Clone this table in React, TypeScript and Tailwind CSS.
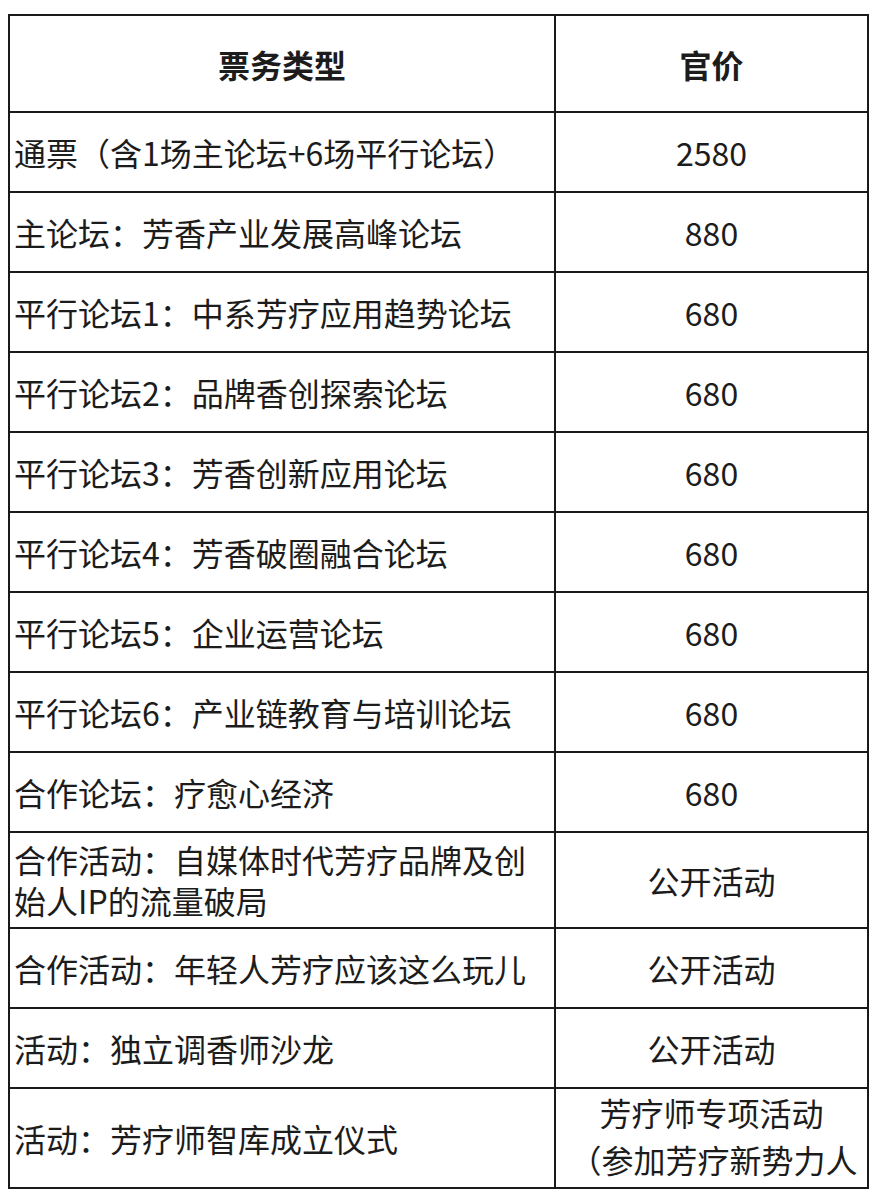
import React from "react";

const rows: { name: React.ReactNode; price: React.ReactNode; h: string }[] = [
  { name: "通票（含1场主论坛+6场平行论坛）", price: "2580", h: "h-[80px]" },
  { name: "主论坛：芳香产业发展高峰论坛", price: "880", h: "h-[80px]" },
  { name: "平行论坛1：中系芳疗应用趋势论坛", price: "680", h: "h-[80px]" },
  { name: "平行论坛2：品牌香创探索论坛", price: "680", h: "h-[80px]" },
  { name: "平行论坛3：芳香创新应用论坛", price: "680", h: "h-[80px]" },
  { name: "平行论坛4：芳香破圈融合论坛", price: "680", h: "h-[80px]" },
  { name: "平行论坛5：企业运营论坛", price: "680", h: "h-[80px]" },
  { name: "平行论坛6：产业链教育与培训论坛", price: "680", h: "h-[80px]" },
  { name: "合作论坛：疗愈心经济", price: "680", h: "h-[80px]" },
  {
    name: (
      <div className="leading-[41px]">
        <div className="whitespace-nowrap">合作活动：自媒体时代芳疗品牌及创</div>
        <div className="whitespace-nowrap">始人IP的流量破局</div>
      </div>
    ),
    price: "公开活动",
    h: "h-[96px]",
  },
  { name: "合作活动：年轻人芳疗应该这么玩儿", price: "公开活动", h: "h-[80px]" },
  { name: "活动：独立调香师沙龙", price: "公开活动", h: "h-[80px]" },
  {
    name: "活动：芳疗师智库成立仪式",
    price: (
      <div className="h-[98px] overflow-hidden leading-[47px]">
        <div className="whitespace-nowrap">芳疗师专项活动</div>
        <div className="whitespace-nowrap pl-[4px]">（参加芳疗新势力人</div>
      </div>
    ),
    h: "h-[100px]",
  },
];

export default function App() {
  return (
    <div
      className="w-[878px] h-[1204px] bg-white pt-[14px] pl-[8px]"
      style={{ fontFamily: '"Noto Sans CJK SC", "Noto Sans", sans-serif' }}
    >
      <table className="border-collapse w-[859px] table-fixed text-[#1c1c1c] text-[32px]">
        <colgroup>
          <col className="w-[546px]" />
          <col className="w-[313px]" />
        </colgroup>
        <thead>
          <tr className="h-[97px]">
            <th className="border-2 border-[#1a1a1a] font-bold text-center align-middle text-[32px]">票务类型</th>
            <th className="border-2 border-[#1a1a1a] font-bold text-center align-middle text-[32px]">官价</th>
          </tr>
        </thead>
        <tbody>
          {rows.map((r, i) => (
            <tr key={i} className={r.h}>
              <td className="border-2 border-[#1a1a1a] pl-[4px] pr-0 align-middle whitespace-nowrap overflow-hidden">
                {r.name}
              </td>
              <td className="border-2 border-[#1a1a1a] p-0 text-center align-middle whitespace-nowrap overflow-hidden">
                {r.price}
              </td>
            </tr>
          ))}
        </tbody>
      </table>
    </div>
  );
}
